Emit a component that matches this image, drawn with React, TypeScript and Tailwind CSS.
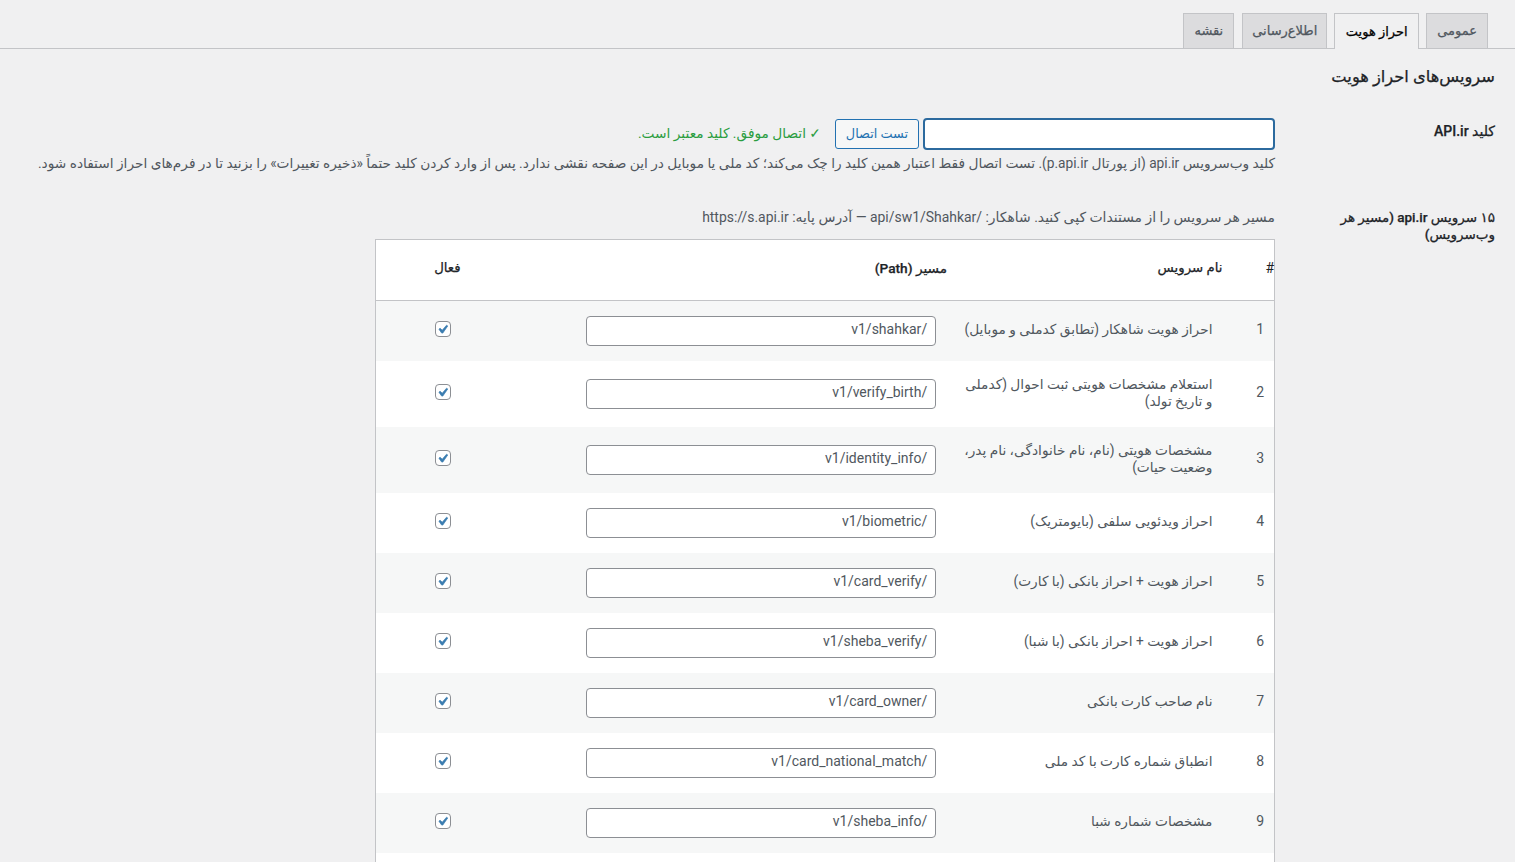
const fontStack = "font-['Roboto','DejaVu_Sans',sans-serif]"

const tabs = [
  { label: "عمومی", className: "h-[35px] bg-[#dcdcde] px-[10px] text-[#50575e]" },
  { label: "احراز هویت", className: "relative -mb-px h-[36px] bg-[#f0f0f1] px-[10.5px] text-black" },
  { label: "اطلاع‌رسانی", className: "h-[35px] bg-[#dcdcde] px-[9px] text-[#50575e]" },
  { label: "نقشه", className: "mr-px h-[35px] bg-[#dcdcde] px-[10px] text-[#50575e]" },
]

const services = [
  { name: "احراز هویت شاهکار (تطابق کدملی و موبایل)", path: "/v1/shahkar", tall: false },
  { name: "استعلام مشخصات هویتی ثبت احوال (کدملی و تاریخ تولد)", path: "/v1/verify_birth", tall: true },
  { name: "مشخصات هویتی (نام، نام خانوادگی، نام پدر، وضعیت حیات)", path: "/v1/identity_info", tall: true },
  { name: "احراز ویدئویی سلفی (بایومتریک)", path: "/v1/biometric", tall: false },
  { name: "احراز هویت + احراز بانکی (با کارت)", path: "/v1/card_verify", tall: false },
  { name: "احراز هویت + احراز بانکی (با شبا)", path: "/v1/sheba_verify", tall: false },
  { name: "نام صاحب کارت بانکی", path: "/v1/card_owner", tall: false },
  { name: "انطباق شماره کارت با کد ملی", path: "/v1/card_national_match", tall: false },
  { name: "مشخصات شماره شبا", path: "/v1/sheba_info", tall: false },
]

function CheckBox() {
  return (
    <span className="-mt-[3px] flex h-4 w-4 items-center justify-center rounded-[4px] border border-[#8c8f94] bg-white">
      <svg viewBox="0 0 20 20" className="h-[17px] w-[17px] shrink-0 text-[#3a7cb0]" fill="currentColor" stroke="currentColor" strokeWidth="0.8">
        <path d="M14.83 4.89l1.34.94-5.81 8.38H9.02L5.78 9.67l1.34-1.25 2.57 2.4z" />
      </svg>
    </span>
  )
}

export default function App() {
  return (
    <div dir="rtl" className={`${fontStack} h-[862px] overflow-hidden bg-[#f0f0f1] text-[13.73px] text-[#50575e]`}>
      <div className="flex h-[49px] items-end gap-[7px] border-b border-[#c3c4c7] pr-[27px]">
        {tabs.map((tab) => (
          <div
            key={tab.label}
            className={`flex items-center border border-b-0 border-[#c3c4c7] text-[13px] font-medium [-webkit-text-stroke:0.25px] ${tab.className}`}
          >
            {tab.label}
          </div>
        ))}
      </div>

      <div className="pr-5">
        <h2 className="mt-[17px] text-[16.3px] leading-[22px] font-medium text-[#1d2327] [-webkit-text-stroke:0.25px]">سرویس‌های احراز هویت</h2>

        <div className="mt-[30px] flex">
          <div className="w-[220px] shrink-0 pt-[3px] text-[14px] leading-[20px] font-medium text-[#1d2327] [-webkit-text-stroke:0.25px]">کلید API.ir</div>
          <div>
            <div className="flex items-center">
              <input
                type="text"
                className="h-8 w-[352px] rounded-[4px] border-2 border-[#2c6a9e] bg-white outline-none"
              />
              <button className="mr-[4px] h-[30px] rounded-[3px] border border-[#2271b1] bg-[#f6f7f7] px-[10px] text-[12.8px] text-[#2271b1]">
                تست اتصال
              </button>
              <span className="mr-[14px] mb-[2px] text-[#2a9d3f]">✓ اتصال موفق. کلید معتبر است.</span>
            </div>
            <p className="mt-[3px] leading-[20px] whitespace-nowrap">
              کلید وب‌سرویس api.ir (از پورتال p.api.ir). تست اتصال فقط اعتبار همین کلید را چک می‌کند؛ کد ملی یا موبایل در این صفحه نقشی ندارد. پس از وارد کردن کلید حتماً «ذخیره تغییرات» را بزنید تا در فرم‌های احراز استفاده شود.
            </p>
          </div>
        </div>

        <div className="mt-[34px] flex">
          <div className="w-[220px] shrink-0 pt-[2px] pl-[40px] text-[13.5px] leading-[17px] font-medium text-[#1d2327] [-webkit-text-stroke:0.25px]">
            ۱۵ سرویس api.ir (مسیر هر وب‌سرویس)
          </div>
          <div>
            <p className="text-[13.93px] leading-[20px]">
              مسیر هر سرویس را از مستندات کپی کنید. شاهکار: /api/sw1/Shahkar — آدرس پایه: https://s.api.ir
            </p>
            <table className="mt-[12px] w-[900px] table-fixed border border-[#c3c4c7] bg-white">
              <colgroup>
                <col className="w-[52px]" />
                <col className="w-[275px]" />
                <col className="w-[486px]" />
                <col className="w-[85px]" />
              </colgroup>
              <thead>
                <tr className="h-[61px] border-b border-[#c3c4c7] text-[13.3px] font-medium text-[#1d2327] [-webkit-text-stroke:0.25px]">
                  <th className="pb-1 text-right text-[14px] font-normal [-webkit-text-stroke:0px]">#</th>
                  <th className="pb-1 text-right font-medium">نام سرویس</th>
                  <th className="pb-1 text-right text-[13.7px] font-medium">مسیر (Path)</th>
                  <th className="pb-1 text-right font-medium">فعال</th>
                </tr>
              </thead>
              <tbody>
                {services.map((service, i) => (
                  <tr key={service.path} className={`${service.tall ? "h-[66px]" : "h-[60px]"} ${i % 2 === 0 ? "bg-[#f6f7f7]" : "bg-white"}`}>
                    <td className="pr-[10px] pb-[2px] text-[14px]">{i + 1}</td>
                    <td className="pr-[10px] pb-[2px] pl-[10px] leading-[17px]">{service.name}</td>
                    <td className="pr-[11px]">
                      <div className="flex h-[30px] w-[350px] items-center rounded-[4px] border border-[#8c8f94] bg-white px-2 pb-[3px] text-[14px]">
                        {service.path}
                      </div>
                    </td>
                    <td className="pr-[10px]">
                      <CheckBox />
                    </td>
                  </tr>
                ))}
                <tr className="h-[60px] bg-white">
                  <td colSpan={4} />
                </tr>
              </tbody>
            </table>
          </div>
        </div>
      </div>
    </div>
  )
}
